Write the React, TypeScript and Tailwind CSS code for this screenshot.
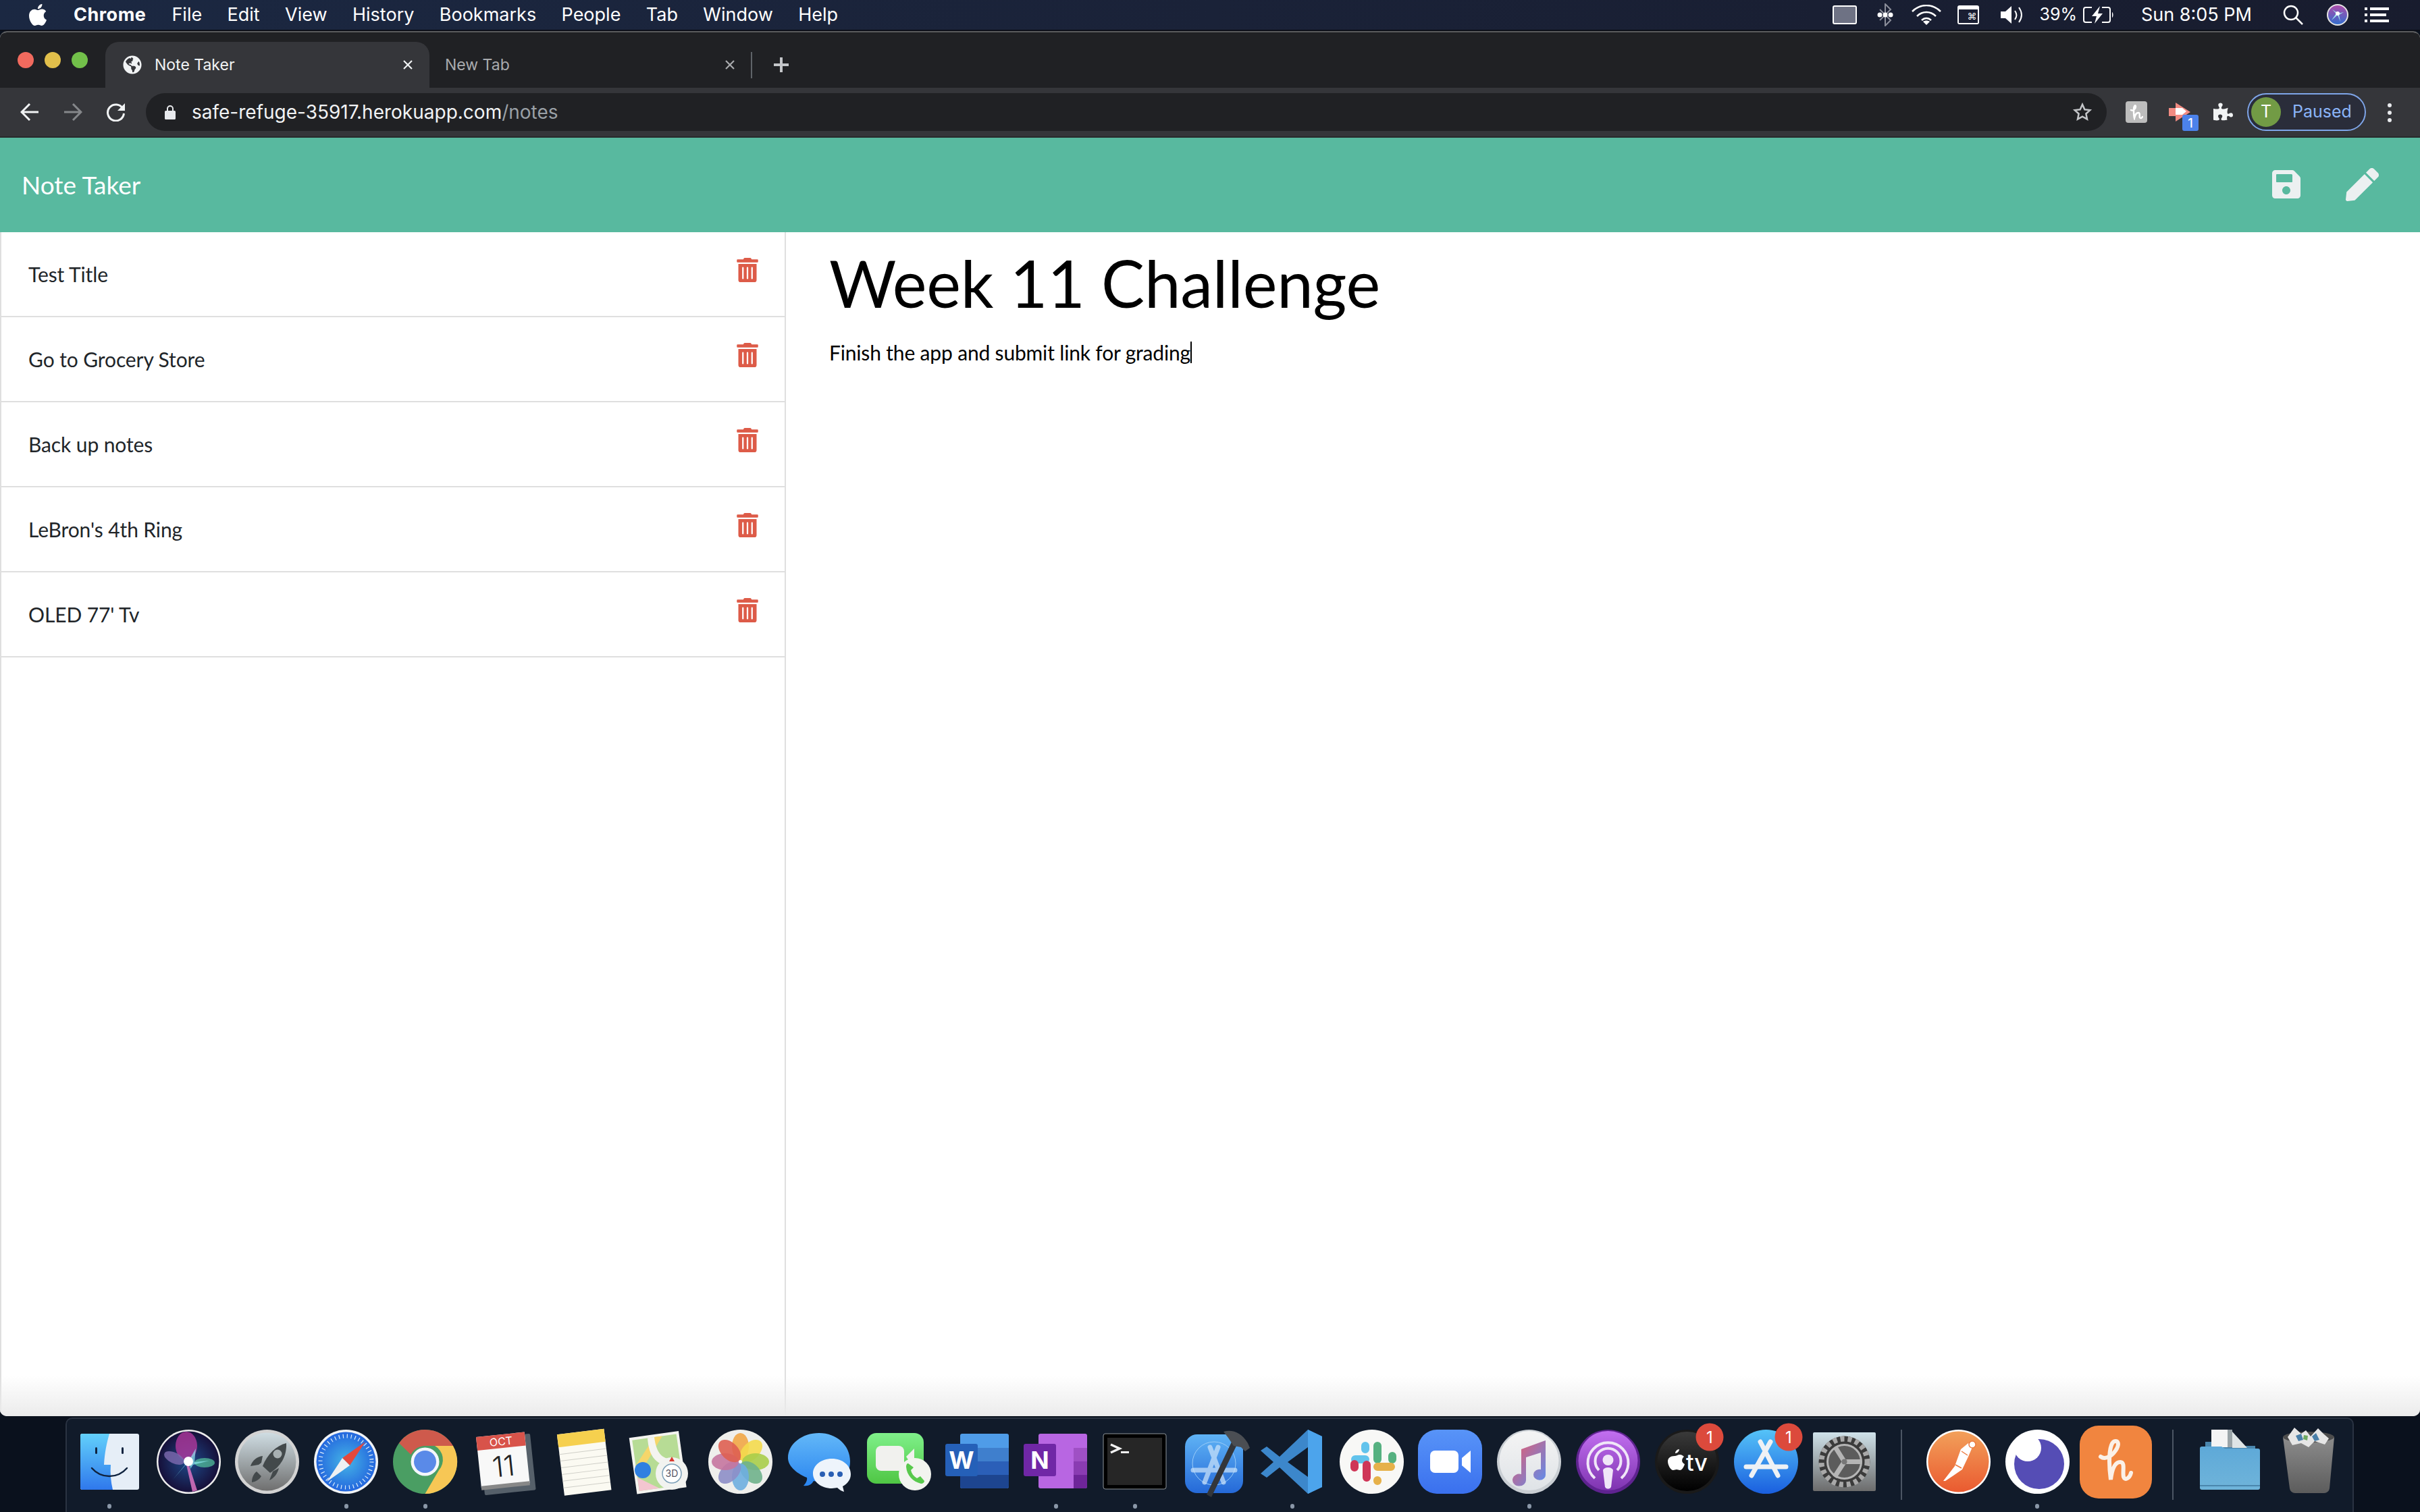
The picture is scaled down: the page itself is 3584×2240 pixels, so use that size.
import React from 'react';
import { FaGlobeAmericas, FaPen, FaPuzzlePiece, FaSave, FaTrashAlt } from 'react-icons/fa';

const notes = ['Test Title', 'Go to Grocery Store', 'Back up notes', "LeBron's 4th Ring", "OLED 77' Tv"];
const menus = ['File', 'Edit', 'View', 'History', 'Bookmarks', 'People', 'Tab', 'Window', 'Help'];

const Svg = ({ children }: { children: React.ReactNode }) => (
  <svg width="95" height="95" viewBox="0 0 95 95" className="overflow-visible">
    {children}
  </svg>
);

const Badge = () => (
  <g>
    <circle cx="81" cy="11" r="20.5" fill="#dc4a3c" />
    <text x="81" y="20" textAnchor="middle" fontSize="24" fill="#fff" fontFamily="Inter, sans-serif">1</text>
  </g>
);

const Grad = ({ id, a, b, x2 = 0 }: { id: string; a: string; b: string; x2?: number }) => (
  <linearGradient id={id} x1="0" y1="0" x2={x2} y2="1">
    <stop offset="0" stopColor={a} />
    <stop offset="1" stopColor={b} />
  </linearGradient>
);

const Finder = () => (
  <Svg>
    <defs><Grad id="fi" a="#62d0fb" b="#2f78ec" /></defs>
    <rect x="4" y="6" width="87" height="83" rx="3" fill="#e6eef7" />
    <path d="M7 6h40c-4 14-7 28-8 46h10c-1 12 0 25 3 37H7a3 3 0 0 1-3-3V9a3 3 0 0 1 3-3z" fill="url(#fi)" />
    <rect x="26" y="26" width="3" height="10" rx="1.5" fill="#10233f" />
    <rect x="65" y="26" width="3" height="10" rx="1.5" fill="#10233f" />
    <path d="M21 57c14 16 38 16 52 0" fill="none" stroke="#10233f" strokeWidth="2.5" strokeLinecap="round" />
  </Svg>
);

const Siri = () => (
  <Svg>
    <defs><radialGradient id="si"><stop offset="0" stopColor="#1e4a8a" /><stop offset="1" stopColor="#16103a" /></radialGradient></defs>
    <circle cx="47.5" cy="47.5" r="47.5" fill="#ececec" />
    <circle cx="47.5" cy="47.5" r="45" fill="url(#si)" />
    <ellipse cx="44" cy="24" rx="16" ry="21" fill="#b0389c" opacity=".8" />
    <ellipse cx="26" cy="42" rx="16" ry="8" fill="#7e6ab0" opacity=".8" transform="rotate(25 26 42)" />
    <ellipse cx="71" cy="49" rx="15" ry="7" fill="#55c8a0" opacity=".7" />
    <path d="M50 44 24 74l20-24z" fill="#7fe5ef" opacity=".8" />
    <path d="M48 45 58 28l-2 20 22-2-24 6-4 6z" fill="#8fe8ef" opacity=".7" />
    <path d="M47 50 60 90l-7 2-9-40z" fill="#e978c8" opacity=".8" />
    <circle cx="47" cy="47" r="7" fill="#fff" />
  </Svg>
);

const Launchpad = () => (
  <Svg>
    <defs><Grad id="la" a="#cfdde3" b="#6f6f6f" /></defs>
    <circle cx="47.5" cy="47.5" r="47.5" fill="#d3d3d3" />
    <circle cx="47.5" cy="47.5" r="43" fill="url(#la)" />
    <path d="M76 20c-15 4-28 16-35 34l11 10c15-9 25-24 24-44z" fill="#43494b" />
    <path d="M41 39c-8 1-15 6-18 15l12-2 4-3zM56 62l-5 13c7-3 12-10 14-18zM32 62c-5 4-7 10-7 16 6-1 11-4 14-9z" fill="#43494b" />
    <circle cx="63" cy="36" r="6.5" fill="#a8b0b2" />
  </Svg>
);

const Safari = () => (
  <Svg>
    <defs><radialGradient id="sa"><stop offset="0" stopColor="#45b5e6" /><stop offset="1" stopColor="#2467de" /></radialGradient></defs>
    <circle cx="47.5" cy="47.5" r="47.5" fill="#f1f3f5" />
    <circle cx="47.5" cy="47.5" r="44" fill="url(#sa)" />
    <circle cx="47.5" cy="47.5" r="38" fill="none" stroke="#dfeefa" strokeWidth="6" strokeDasharray="1.2 4.8" />
    <path d="M76 18 42 42l11 11z" fill="#e5483c" />
    <path d="M19 77l23-35 11 11z" fill="#eef0f2" />
  </Svg>
);

const ChromeIcon = () => (
  <Svg>
    <circle cx="47.5" cy="47.5" r="47.5" fill="#4a9e63" />
    <path d="M47.5 0A47.5 47.5 0 0 1 89 24H47.5a23.5 23.5 0 0 0-21 13L9 20A47.5 47.5 0 0 1 47.5 0z" fill="#ce5a4c" />
    <path d="M89 24a47.5 47.5 0 0 1-41.500 71L68 60a23.5 23.5 0 0 0-6-36z" fill="#f7c755" />
    <circle cx="47.500" cy="47.500" r="21" fill="#f4f6fb" />
    <circle cx="47.500" cy="47.500" r="16.500" fill="#5a8ae8" />
  </Svg>
);

const Calendar = () => (
  <Svg>
    <g transform="rotate(-6 47 47)">
      <rect x="14" y="10" width="76" height="84" rx="2" fill="#56606a" />
      <rect x="10" y="7" width="72" height="76" fill="#f8f8f8" />
      <rect x="10" y="7" width="72" height="20" fill="#d8534a" />
      <rect x="10" y="80" width="72" height="6" fill="#888" />
      <text x="46" y="23" textAnchor="middle" fontSize="16" fill="#fff" fontFamily="Inter, sans-serif">OCT</text>
      <text x="46" y="69" textAnchor="middle" fontSize="42" fill="#222" fontFamily="Inter, sans-serif" fontWeight="300">11</text>
    </g>
  </Svg>
);

const NotesIcon = () => (
  <Svg>
    <g transform="rotate(-7 47 47)">
      <rect x="14" y="3" width="70" height="91" fill="#fbfaf2" />
      <rect x="14" y="3" width="70" height="19" fill="#f6d04e" />
      {[32, 42, 52, 62, 72, 82].map((y) => (
        <rect key={y} x="14" y={y} width="70" height="1" fill="#cfcfc8" />
      ))}
    </g>
  </Svg>
);

const Maps = () => (
  <Svg>
    <g transform="rotate(-8 47 47)">
      <rect x="5" y="6" width="74" height="84" fill="#f4f4f0" />
      <rect x="9" y="10" width="66" height="76" fill="#b7dc95" />
      <path d="M9 48 42 10h12L9 66z" fill="#f5d66a" />
      <path d="M42 10c0 30 10 36 33 38v10C40 56 30 40 32 10z" fill="#f4f4f0" />
      <path d="M9 66l30 20H9z" fill="#f3c6d0" />
    </g>
    <circle cx="20" cy="60" r="12" fill="#2f7fe0" />
    <ellipse cx="63" cy="65" rx="24" ry="24" fill="#f2f3f0" />
    <circle cx="63" cy="65" r="14" fill="#fff" stroke="#7da0b8" strokeWidth="1.500" />
    <path d="M63 40l4 7h-8z" fill="#d93a30" />
    <text x="63" y="70" textAnchor="middle" fontSize="14" fill="#556" fontFamily="Inter, sans-serif">3D</text>
  </Svg>
);

const Photos = () => {
  const colors = ['#f1a647', '#f4da4e', '#a8cd4a', '#6fb18c', '#6eaee0', '#8d8ec8', '#c576a0', '#de5f52'];
  return (
    <Svg>
      <circle cx="47.500" cy="47.500" r="47.500" fill="#efefec" />
      {colors.map((c, i) => (
        <ellipse key={c} cx="47.500" cy="25" rx="12.500" ry="20" fill={c} opacity=".9" transform={`rotate(${i * 45} 47.500 47.500)`} />
      ))}
      <circle cx="47.500" cy="47.500" r="2" fill="#fff" />
    </Svg>
  );
};

const Messages = () => (
  <Svg>
    <defs><Grad id="me" a="#63b8f8" b="#2a85f0" /></defs>
    <path d="M47 5c26 0 46 18 46 42 0 12-5 22-13 30H50c-3 0-8 0-11-1-3 5-7 8-15 7 3-3 6-8 5-12C12 64 1 53 1 42 1 21 22 5 47 5z" fill="url(#me)" />
    <path d="M66 43c16 0 28 10 28 23 0 8-5 14-12 18l2 8c-4-1-7-3-10-6-2 0-5 1-8 1-16 0-28-10-28-22 0-12 12-22 28-22z" fill="#eef4fb" />
    <circle cx="52" cy="66" r="4" fill="#2a5fb4" />
    <circle cx="65" cy="66" r="4" fill="#2a5fb4" />
    <circle cx="78" cy="66" r="4" fill="#2a5fb4" />
  </Svg>
);

const FaceTime = () => (
  <Svg>
    <defs><Grad id="ft" a="#7ff08a" b="#4fc644" /></defs>
    <rect x="1" y="5" width="84" height="75" rx="14" fill="url(#ft)" />
    <rect x="14" y="24" width="42" height="37" rx="8" fill="#f1f1ee" />
    <path d="M59 40l12-12v30z" fill="#f1f1ee" />
    <ellipse cx="72" cy="66" rx="24" ry="24" fill="#f2f4ef" />
    <path d="M62 50c-2 0-3 2-3 5 1 13 10 22 22 25 3 0 5-2 5-4l-6-7-5 3c-5-3-8-7-9-12l4-4z" fill="#58c94c" />
  </Svg>
);

const Word = () => (
  <Svg>
    <rect x="22" y="6" width="72" height="81" rx="3" fill="#4f9ce8" />
    <rect x="22" y="27" width="72" height="22" fill="#3f7fcd" />
    <rect x="22" y="47" width="72" height="21" fill="#2b5fb8" />
    <path d="M22 67h72v17a3 3 0 0 1-3 3H25a3 3 0 0 1-3-3z" fill="#1d4590" />
    <rect x="0" y="21" width="48" height="48" rx="3" fill="#2560b8" />
    <text x="24" y="58" textAnchor="middle" fontSize="36" fontWeight="700" fill="#fff" fontFamily="Inter, sans-serif">W</text>
  </Svg>
);

const OneNote = () => (
  <Svg>
    <rect x="22" y="6" width="72" height="81" rx="3" fill="#b866e2" />
    <rect x="74" y="27" width="20" height="22" fill="#9f50c4" />
    <rect x="74" y="47" width="20" height="21" fill="#8a3cb2" />
    <path d="M74 67h20v17a3 3 0 0 1-3 3H74z" fill="#6e2599" />
    <rect x="0" y="21" width="48" height="48" rx="3" fill="#7027a6" />
    <text x="24" y="58" textAnchor="middle" fontSize="36" fontWeight="700" fill="#fff" fontFamily="Inter, sans-serif">N</text>
  </Svg>
);

const Terminal = () => (
  <Svg>
    <rect x="1" y="6" width="93" height="82" rx="3" fill="#000" stroke="#8d9499" strokeWidth="1" />
    <rect x="7" y="12" width="81" height="70" fill="#262626" />
    <path d="M12 22l13 6-13 6" fill="none" stroke="#f3f3f3" strokeWidth="3.500" />
    <rect x="27" y="32" width="12" height="3" fill="#f3f3f3" />
  </Svg>
);

const Xcode = () => (
  <Svg>
    <defs><Grad id="xc" a="#5fb3f5" b="#2569d8" /></defs>
    <rect x="5" y="7" width="86" height="87" rx="18" fill="url(#xc)" />
    <circle cx="48" cy="50" r="32" fill="none" stroke="#9bcdf8" strokeWidth="1" />
    <path d="M34 78 54 26M62 78 42 26M17 60h62" fill="none" stroke="#cfe6fb" strokeOpacity=".7" strokeWidth="7" strokeLinecap="round" />
    <path d="M76 14 37 96l7 4 40-82z" fill="#33363b" />
    <path d="M62 3c12-4 27 1 36 17l3 7-7 5-6-6-11-2-8-12z" fill="#4b4e53" />
  </Svg>
);

const VSCode = () => (
  <Svg>
    <path d="M70 0 28 40 9 25 0 31l19 17L0 65l9 6 19-15 42 39 21-10V10z" fill="#3c87cb" />
    <path d="M70 0l21 10v75L70 95z" fill="#4ca4ec" />
    <path d="M70 26 40 48l30 22z" fill="#111b2a" />
  </Svg>
);

const Slack = () => (
  <Svg>
    <circle cx="47.500" cy="47.500" r="47.500" fill="#f8f8f6" />
    <g fill="none" strokeWidth="12" strokeLinecap="round">
      <path d="M56 24v20M78 39v5" stroke="#56b180" />
      <path d="M23 44h15M38 24v5" stroke="#62c3ec" />
      <path d="M40 52v19M22 51v5" stroke="#cf3657" />
      <path d="M56 55h20M56 75v1" stroke="#e6b14a" />
    </g>
  </Svg>
);

const Zoom = () => (
  <Svg>
    <defs><Grad id="zo" a="#5894f8" b="#3a70ee" /></defs>
    <rect x="0" y="0" width="95" height="95" rx="28" fill="url(#zo)" />
    <rect x="18" y="31" width="42" height="33" rx="7" fill="#fff" />
    <path d="M65 42l13-11v33l-13-11z" fill="#fff" />
  </Svg>
);

const Music = () => (
  <Svg>
    <defs>
      <Grad id="mu" a="#f4f4f4" b="#dfe3e7" />
      <Grad id="mn" a="#ea5a6b" b="#5a8ef0" x2={1} />
    </defs>
    <circle cx="47.500" cy="47.500" r="47.500" fill="#c9ced3" />
    <circle cx="47.500" cy="46" r="44" fill="url(#mu)" />
    <path d="M36 29l36-13v50a9 8 0 1 1-7-7V34l-22 7v33a10 9 0 1 1-7-8z" fill="url(#mn)" />
  </Svg>
);

const Podcasts = () => (
  <Svg>
    <defs><Grad id="po" a="#c26ff0" b="#7e34b0" /></defs>
    <circle cx="47.500" cy="47.500" r="47.500" fill="#5f2390" />
    <circle cx="47.500" cy="46" r="44" fill="url(#po)" />
    <g fill="none" stroke="#f0e6f8" strokeWidth="4">
      <path d="M28 72a30 30 0 1 1 39 0" />
      <path d="M34 60a19 19 0 1 1 27 0" />
    </g>
    <circle cx="47.500" cy="45" r="8" fill="#f0e6f8" />
    <path d="M40 60a8 6 0 0 1 15 0l-3 25a5 5 0 0 1-9 0z" fill="#f0e6f8" />
  </Svg>
);

const TV = () => (
  <Svg>
    <defs><Grad id="tv" a="#3a3a3a" b="#000" /></defs>
    <circle cx="47.500" cy="47.500" r="47.500" fill="#1a1a1a" />
    <circle cx="47.500" cy="47" r="44" fill="url(#tv)" />
    <text x="62" y="61" textAnchor="middle" fontSize="34" fontWeight="500" fill="#fff" fontFamily="Inter, sans-serif">tv</text>
    <path d="M29 39c3 0 5-2 8-2 2 0 4 1 6 3-4 3-4 9 1 11-1 4-4 9-7 9-2 0-3-1-5-1s-3 1-5 1c-4 0-8-8-8-13 0-5 4-8 10-8zM36 29c0 3-3 6-6 6 0-3 3-6 6-6z" fill="#fff" />
    <Badge />
  </Svg>
);

const AppStore = () => (
  <Svg>
    <defs><Grad id="as" a="#55c3f8" b="#1a5fdf" /></defs>
    <circle cx="47.500" cy="47.500" r="47.500" fill="url(#as)" />
    <g fill="none" stroke="#eef1f5" strokeWidth="7" strokeLinecap="round">
      <path d="M54 18 26 68M39 18l26 50" />
      <path d="M18 55h59" />
    </g>
    <Badge />
  </Svg>
);

const Prefs = () => (
  <Svg>
    <defs><Grad id="pr" a="#cfe2ea" b="#6c6c6c" /></defs>
    <rect x="1" y="4" width="93" height="87" rx="2" fill="url(#pr)" />
    <circle cx="47.500" cy="47.500" r="38" fill="#3b3b3b" />
    <circle cx="47.500" cy="47.500" r="34" fill="none" stroke="#a8a8a8" strokeWidth="8" strokeDasharray="6 5" />
    <circle cx="47.500" cy="47.500" r="25" fill="#5c5c5c" stroke="#b5b5b5" strokeWidth="3" />
    <path d="M47.500 47.500 34 26M47.500 47.500l26 0M47.500 47.500 33 70" stroke="#b5b5b5" strokeWidth="7" />
    <circle cx="47.500" cy="47.500" r="4" fill="#777" />
  </Svg>
);

const Postman = () => (
  <Svg>
    <defs><Grad id="pm" a="#f2a05a" b="#ea5a30" /></defs>
    <circle cx="47.500" cy="47.500" r="47.500" fill="#fff" />
    <circle cx="47.500" cy="47.500" r="45" fill="url(#pm)" />
    <path d="M25 76 42 54l9-25 11-9 6 6-6 14-9 19-13 9-12 8z" fill="#fff" />
    <circle cx="68" cy="22" r="5" fill="#fff" stroke="#ec7a40" strokeWidth="1.500" />
    <path d="M43 52l9 5M52 32l9 6" stroke="#ec7a40" strokeWidth="1.500" />
  </Svg>
);

const Iris = () => (
  <Svg>
    <circle cx="47.500" cy="47.500" r="47.500" fill="#fff" />
    <ellipse cx="50" cy="51" rx="37" ry="37" fill="#554db5" />
    <circle cx="33" cy="27" r="20" fill="#fff" />
  </Svg>
);

const HApp = () => (
  <svg width="108" height="108" viewBox="0 0 108 108" className="-mx-[7px] -my-[7px] overflow-visible">
    <rect width="107" height="108" rx="28" fill="#f1853f" />
    <path d="M31 46c8 6 19-3 24-12 4-8 1-11-2-11-5 0-9 9-9 30 0 12 1 20 2 27 1-8 4-26 14-26 8 0 3 14 5 22 2 6 9 2 11-6" fill="none" stroke="#fbf1e8" strokeWidth="6" strokeLinecap="round" />
  </svg>
);

const Folder = () => (
  <Svg>
    <defs><Grad id="fo" a="#5ea9d8" b="#6fb4da" /></defs>
    <g transform="translate(1 0)">
      <path d="M10 18h24l4 6h46v20H10z" fill="#4a86ad" />
      <path d="M19 0h24v26H19z" fill="#f4f4f4" />
      <path d="M50 3 72 27H50z" fill="#dfe5e6" />
      <rect x="43" y="0" width="7" height="26" fill="#9aa4a8" />
      <path d="M2 28a3 3 0 0 1 3-3h29l5 3h49a3 3 0 0 1 3 3v55a3 3 0 0 1-3 3H5a3 3 0 0 1-3-3z" fill="url(#fo)" />
      <rect x="2" y="82" width="89" height="2" fill="#4a86ad" />
    </g>
  </Svg>
);

const Trash = () => (
  <Svg>
    <defs><Grad id="tr" a="#8c8c8c" b="#5c5c5c" /></defs>
    <path d="M9 11h76l-7 76a8 8 0 0 1-8 7H27a8 8 0 0 1-8-7z" fill="url(#tr)" />
    <ellipse cx="47" cy="11" rx="38" ry="8" fill="#4d4d4d" />
    <path d="M16 11 26-3l10 9 7-5 7 9 11-12 9 9 7 6-6 9-15-5-9 9-11-6-13 3z" fill="#e6e6e6" />
    <path d="M28 9l8-3 3 9-7 2zM52 10l6-5 5 10-7 2z" fill="#4a7fa8" />
    <path d="M40 8l6 1-1 7-6-2z" fill="#6ea860" />
  </Svg>
);

const dockApps: [React.FC, boolean][] = [
  [Finder, true], [Siri, false], [Launchpad, false], [Safari, true], [ChromeIcon, true], [Calendar, false],
  [NotesIcon, false], [Maps, false], [Photos, false], [Messages, false], [FaceTime, false], [Word, false],
  [OneNote, true], [Terminal, true], [Xcode, false], [VSCode, true], [Slack, false], [Zoom, false],
  [Music, true], [Podcasts, false], [TV, false], [AppStore, false], [Prefs, false],
];

const DockCell = ({ Icon, running }: { Icon: React.FC; running?: boolean }) => (
  <div className="relative flex h-[95px] w-[116.8px] shrink-0 items-center justify-center">
    <Icon />
    {running && <div className="absolute bottom-[-22px] h-[7px] w-[6px] rounded-full bg-[#8a97a8]" />}
  </div>
);

const DockDivider = () => (
  <div className="flex h-[104px] w-[51.6px] shrink-0 justify-center">
    <div className="h-full w-[2px] bg-[#4b5563]" />
  </div>
);

const MenuBar = () => (
  <div className="flex h-[46px] shrink-0 items-center justify-between border-b-2 border-[#0c0f18] bg-gradient-to-r from-[#1b2842] via-[#1a2238] to-[#181c2e] font-['Inter',sans-serif] text-[27px] text-white">
    <div className="flex items-center">
      <svg width="26" height="32" viewBox="0 0 814 1000" className="ml-[43px] mr-[40px]" fill="#fff">
        <path d="M788 341c-6 4-108 62-108 190 0 149 131 202 135 203-1 3-21 72-69 143-43 62-88 124-156 124s-86-40-164-40c-76 0-103 41-165 41s-106-57-156-127C47 793 0 664 0 541c0-197 128-301 254-301 67 0 123 44 165 44 40 0 102-47 178-47 29 0 133 3 191 104zM555 157c31-37 53-88 53-139 0-7-1-14-2-20-51 2-111 34-147 76-28 32-55 83-55 135 0 8 1 16 2 18 3 1 8 1 13 1 45 0 102-30 136-71z" />
      </svg>
      <span className="mr-[38px] font-bold tracking-[0.5px]">Chrome</span>
      <div className="flex gap-[37.400px]">
        {menus.map((m) => (
          <span key={m}>{m}</span>
        ))}
      </div>
    </div>
    <div className="flex items-center">
      <div className="mr-[30px] h-[28px] w-[36px] rounded-[3px] border-2 border-white bg-[#6e7284]" />
      <svg width="24" height="34" viewBox="0 0 24 34" className="mr-[27px]" fill="none" stroke="#8a8d99" strokeWidth="2">
        <path d="M4 9l16 16-8 8V1l8 8L4 25" />
        <g fill="#fff" stroke="none"><circle cx="4" cy="17" r="3.500" /><circle cx="12" cy="17" r="3.500" /><circle cx="20" cy="17" r="3.500" /></g>
      </svg>
      <svg width="44" height="30" viewBox="0 0 44 30" className="mr-[24px]" fill="none" stroke="#fff" strokeWidth="2.500">
        <path d="M1 10c12-12 30-12 42 0M8 17c8-8 20-8 28 0M15 23c4-4 10-4 14 0" />
        <path d="M22 30l-5-5c3-2 7-2 10 0z" fill="#fff" stroke="none" />
      </svg>
      <div className="relative mr-[32px] h-[28px] w-[32px] rounded-[3px] bg-white">
        <div className="absolute bottom-[2px] left-[2px] right-[2px] top-[6px] flex items-center justify-end bg-[#1a1f33] pr-[1px] text-[14px] leading-none">⌘</div>
      </div>
      <svg width="34" height="28" viewBox="0 0 34 28" className="mr-[24px]" fill="none" stroke="#fff" strokeWidth="2">
        <path d="M0 9h7l9-8v26l-9-8H0z" fill="#fff" stroke="none" />
        <path d="M21 8c3 4 3 9 0 13M27 3c5 7 5 15 0 22" />
      </svg>
      <span className="mr-[9px] text-[25px]">39%</span>
      <svg width="46" height="26" viewBox="0 0 46 26" className="mr-[40px]" fill="none" stroke="#fff" strokeWidth="2">
        <path d="M13 2H4a3 3 0 0 0-3 3v16a3 3 0 0 0 3 3h9M28 2h9a3 3 0 0 1 3 3v16a3 3 0 0 1-3 3h-9" />
        <path d="M25 0 13 15h7l-3 11 12-15h-7z" fill="#fff" stroke="none" />
        <path d="M43 9c2 1 2 7 0 8z" fill="#fff" stroke="none" />
      </svg>
      <span className="mr-[46px]">Sun 8:05 PM</span>
      <svg width="30" height="30" viewBox="0 0 30 30" className="mr-[35px]" fill="none" stroke="#fff" strokeWidth="2.500">
        <circle cx="12" cy="12" r="10" />
        <path d="M19 19l10 10" />
      </svg>
      <svg width="32" height="32" viewBox="0 0 32 32" className="mr-[24px]">
        <defs><Grad id="ms" a="#b04aa8" b="#2f6fd0" /></defs>
        <circle cx="16" cy="16" r="15" fill="url(#ms)" stroke="#e5e5e5" strokeWidth="2" />
        <path d="M16 16 7 24l7-10-6-6 9 6 8-2-7 4 2 10z" fill="#9feaf0" />
        <circle cx="16" cy="14" r="3" fill="#fff" />
      </svg>
      <svg width="36" height="22" viewBox="0 0 36 22" className="mr-[46px]" fill="#fff">
        <rect x="0" y="0" width="4" height="4" /><rect x="8" y="0" width="28" height="4" />
        <rect x="0" y="9" width="4" height="4" /><rect x="8" y="9" width="24" height="4" />
        <rect x="0" y="18" width="4" height="4" /><rect x="8" y="18" width="28" height="4" />
      </svg>
    </div>
  </div>
);

const TabX = ({ color }: { color: string }) => (
  <svg width="16" height="16" viewBox="0 0 16 16" fill="none" stroke={color} strokeWidth="2.200">
    <path d="M2 2l12 12M14 2 2 14" />
  </svg>
);

const TabStrip = () => (
  <div className="flex h-[82px] shrink-0 items-end bg-[#202124] font-['Inter',sans-serif] text-[23px]">
    <div className="flex h-[68px] w-[156px] shrink-0 items-start gap-[16px] pl-[26px] pt-[15px]">
      <div className="h-[24px] w-[24px] rounded-full bg-[#f16a5e]" />
      <div className="h-[24px] w-[24px] rounded-full bg-[#e1bf4b]" />
      <div className="h-[24px] w-[24px] rounded-full bg-[#72c04a]" />
    </div>
    <div className="flex h-[68px] w-[480px] shrink-0 items-center rounded-t-[20px] bg-[#35363a] pl-[26px] pr-[24px] text-[#f1f3f4]">
      <FaGlobeAmericas size={28} color="#f1f3f4" />
      <span className="ml-[19px] flex-1">Note Taker</span>
      <TabX color="#f1f3f4" />
    </div>
    <div className="flex h-[68px] w-[476px] shrink-0 items-center pl-[23px] pr-[23px] text-[#a9abae]">
      <span className="flex-1">New Tab</span>
      <TabX color="#a9abae" />
    </div>
    <div className="mb-[14px] h-[39px] w-[2px] shrink-0 bg-[#5f6368]" />
    <svg width="24" height="24" viewBox="0 0 24 24" className="mb-[22px] ml-[31px]" fill="none" stroke="#c4c6c9" strokeWidth="4">
      <path d="M12 1v22M1 12h22" />
    </svg>
  </div>
);

const Toolbar = () => (
  <div className="flex h-[74px] shrink-0 items-start border-b-2 border-[#28292c] bg-[#35363a] pt-[8px] font-['Inter',sans-serif]">
    <svg width="28" height="26" viewBox="0 0 28 26" className="ml-[30px] mt-[15px]" fill="none" stroke="#f1f3f4" strokeWidth="3">
      <path d="M27 13H3M14 1 2 13l12 12" />
    </svg>
    <svg width="28" height="26" viewBox="0 0 28 26" className="ml-[36px] mt-[15px]" fill="none" stroke="#85878a" strokeWidth="3">
      <path d="M1 13h24M14 1l12 12-12 12" />
    </svg>
    <svg width="28" height="28" viewBox="0 0 28 28" className="ml-[36px] mt-[14px]" fill="none" stroke="#f1f3f4" strokeWidth="3">
      <path d="M24 9a12 12 0 1 0 1.500 7" />
      <path d="M27 1v11H16z" fill="#f1f3f4" stroke="none" />
    </svg>
    <div className="ml-[30px] flex h-[56px] w-[2904px] shrink-0 items-center rounded-full bg-[#202124] pl-[28px] pr-[21px] text-[28px]">
      <svg width="16" height="22" viewBox="0 0 16 22" fill="#e8eaed" className="mr-[24px]">
        <path d="M3 9V6a5 5 0 0 1 10 0v3h1.500A1.500 1.500 0 0 1 16 10.500v10a1.500 1.500 0 0 1-1.500 1.500h-13A1.500 1.500 0 0 1 0 20.500v-10A1.500 1.500 0 0 1 1.500 9zm2 0h6V6a3 3 0 0 0-6 0z" />
      </svg>
      <span className="flex-1 text-[#f1f3f4]">
        safe-refuge-35917.herokuapp.com<span className="text-[#9aa0a6]">/notes</span>
      </span>
      <svg width="30" height="30" viewBox="0 0 24 24" fill="none" stroke="#c4c6c9" strokeWidth="2">
        <path d="M12 3l2.700 6 6.300.7-4.700 4.300 1.300 6.500L12 17.300 6.400 20.500 7.700 14 3 9.700 9.300 9z" />
      </svg>
    </div>
    <div className="ml-[28px] mt-[12px] flex h-[32px] w-[32px] shrink-0 items-center justify-center rounded-[4px] bg-[#bdbdbd]">
      <svg width="20" height="24" viewBox="0 0 20 24" fill="none" stroke="#fff" strokeWidth="2.500" strokeLinecap="round">
        <path d="M2 9c3 2 7-2 7-5 0-3-3-2-3 5 0 5 0 9 1 12 1-4 2-8 6-8 3 0 1 5 2 7s3 1 4-1" />
      </svg>
    </div>
    <div className="relative ml-[32px] mt-[14px] h-[42px] w-[44px] shrink-0">
      <svg width="32" height="28" viewBox="0 0 32 28" fill="#f28b82">
        <path d="M10 0l22 14-22 14v-8H0V8h10z" />
        <path d="M10 8h10l6 5-6 5H10z" fill="#fff" />
      </svg>
      <div className="absolute bottom-0 right-0 flex h-[24px] w-[24px] items-center justify-center rounded-[3px] bg-[#4c82ea] text-[18px] font-medium text-white">1</div>
    </div>
    <div className="ml-[22px] mt-[13px] shrink-0">
      <FaPuzzlePiece size={29} color="#f1f3f4" />
    </div>
    <div className="ml-[21px] flex h-[56px] w-[176px] shrink-0 items-center rounded-full border-2 border-[#7ea5e8] bg-[#2a2d3a] pl-[4px]">
      <div className="flex h-[44px] w-[44px] items-center justify-center rounded-full bg-[#729b45] text-[25px] text-white">T</div>
      <span className="ml-[17px] text-[25px] text-[#8ab4f8]">Paused</span>
    </div>
    <div className="ml-[32px] mt-[15px] flex shrink-0 flex-col gap-[5px]">
      <div className="h-[6px] w-[6px] rounded-full bg-[#e8eaed]" />
      <div className="h-[6px] w-[6px] rounded-full bg-[#e8eaed]" />
      <div className="h-[6px] w-[6px] rounded-full bg-[#e8eaed]" />
    </div>
  </div>
);

export default function App() {
  return (
    <div className="flex h-[2240px] w-[3584px] flex-col overflow-hidden bg-[#0a111d]">
      <MenuBar />
      {/* browser window */}
      <div className="relative flex h-[2052px] shrink-0 flex-col overflow-hidden rounded-[10px] border-t-2 border-[#5a5b5d] bg-white">
        <TabStrip />
        <Toolbar />
        <div className="flex h-[140px] shrink-0 items-center justify-between bg-[#58b99f] pl-[32px] pr-[61px]">
          <span className="font-['Lato',sans-serif] text-[37px] text-white">Note Taker</span>
          <div className="mb-[2px] flex items-center gap-[64px]">
            <FaSave size={48} color="#ecf0f1" />
            <FaPen size={49} color="#ecf0f1" />
          </div>
        </div>
        <div className="flex min-h-0 flex-1 font-['Lato',sans-serif]">
          <div className="w-[1164px] shrink-0 border-x-2 border-[#dfdfdf]">
            {notes.map((n) => (
              <div key={n} className="flex h-[126px] items-start justify-between border-b-2 border-[#dfdfdf] pl-[40px] pr-[37px]">
                <span className="mt-[43px] text-[30px] leading-[38px] tracking-[-0.1px] text-[#212529]">{n}</span>
                <FaTrashAlt size={36} color="#dd5b48" className="mt-[38px]" />
              </div>
            ))}
          </div>
          <div className="flex-1 pl-[64px] text-black">
            <h1 className="mt-[13px] text-[96px] leading-[124px] tracking-[-0.2px]">Week 11 Challenge</h1>
            <div className="mt-[19px] flex items-center text-[30px] leading-[44px] tracking-[-0.17px]">
              <span>Finish the app and submit link for grading</span>
              <div className="h-[32px] w-[2px] bg-black" />
            </div>
          </div>
        </div>
        {/* dock shadow on the bottom of the window */}
        <div className="pointer-events-none absolute bottom-0 left-0 right-0 h-[60px] bg-gradient-to-b from-transparent to-[#ebebeb]" />
      </div>
      {/* dock */}
      <div className="ml-[97px] mt-[2px] flex h-[140px] w-[3389px] shrink-0 items-start rounded-t-[10px] border-x-2 border-t-2 border-[#2a3342] bg-[#111b2a] pl-[5px] pt-[16px]">
        {dockApps.map(([Icon, running], i) => (
          <DockCell key={i} Icon={Icon} running={running} />
        ))}
        <DockDivider />
        <DockCell Icon={Postman} />
        <DockCell Icon={Iris} running />
        <DockCell Icon={HApp} />
        <DockDivider />
        <DockCell Icon={Folder} />
        <DockCell Icon={Trash} />
      </div>
    </div>
  );
}
